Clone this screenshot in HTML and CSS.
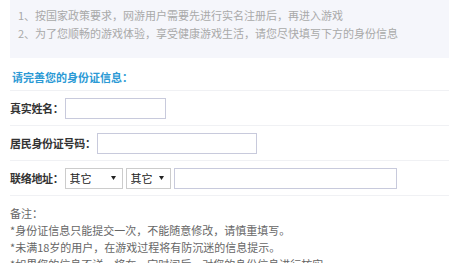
FILE: index.html
```html
<!DOCTYPE html>
<html lang="zh-CN">
<head>
<meta charset="utf-8">
<title>实名认证</title>
<link rel="stylesheet" href="styles.css">
</head>
<body>
<div class="page">
  <div class="tips">
    <p>1、按国家政策要求，网游用户需要先进行实名注册后，再进入游戏</p>
    <p>2、为了您顺畅的游戏体验，享受健康游戏生活，请您尽快填写下方的身份信息</p>
  </div>
  <h3 class="title">请完善您的身份证信息：</h3>
  <div class="row">
    <label class="label">真实姓名：</label>
    <input class="field w-name" type="text">
  </div>
  <div class="row">
    <label class="label">居民身份证号码：</label>
    <input class="field w-id" type="text">
  </div>
  <div class="row">
    <label class="label">联络地址：</label>
    <select class="sel w-prov"><option>其它</option></select>
    <select class="sel w-city"><option>其它</option></select>
    <input class="field w-addr" type="text">
  </div>
  <div class="notes">
    <p>备注：</p>
    <p>*身份证信息只能提交一次，不能随意修改，请慎重填写。</p>
    <p>*未满18岁的用户，在游戏过程将有防沉迷的信息提示。</p>
    <p>*如果您的信息不详，将在一定时间后，对您的身份信息进行核实。</p>
  </div>
</div>
</body>
</html>
```
FILE: styles.css
```css
html, body {
  margin: 0;
  padding: 0;
  background: #ffffff;
}
body {
  font-family: "Noto Sans CJK SC", "Microsoft YaHei", sans-serif;
  font-size: 11px;
  color: #333;
  overflow: hidden;
}
p { margin: 0; }
.page {
  padding: 0 4px 0 10px;
}
.tips {
  background: #f5f6fb;
  height: 58px;
  box-sizing: border-box;
  padding: 6px 8px 0 8px;
  color: #a9a9a9;
  line-height: 18px;
}
.title {
  margin: 0;
  padding: 10px 0 4px 2px;
  line-height: 18px;
  font-size: 11px;
  font-weight: bold;
  color: #2c9ad5;
  border-bottom: 1px solid #f0f1f4;
}
.row {
  display: flex;
  align-items: center;
  height: 34px;
  border-bottom: 1px solid #f0f1f4;
}
.label {
  font-weight: bold;
  color: #333;
  letter-spacing: -0.3px;
  margin-right: 1px;
  white-space: nowrap;
}
.field {
  box-sizing: border-box;
  height: 21px;
  border: 1px solid #c8cadc;
  background: #fff;
  padding: 0 3px;
  margin: 0;
  outline: none;
}
.w-name { width: 101px; }
.w-id { width: 160px; }
.w-addr { width: 223px; margin-left: 3px; }
.sel {
  -webkit-appearance: none;
  appearance: none;
  box-sizing: border-box;
  height: 21px;
  border: 1px solid #cccccc;
  border-radius: 0;
  background: #fff url("data:image/svg+xml;utf8,<svg xmlns='http://www.w3.org/2000/svg' width='5' height='4'><path d='M0 0H5L2.5 4Z' fill='%23222'/></svg>") no-repeat right 6px center;
  font-family: "Noto Sans CJK SC", sans-serif;
  font-size: 11px;
  color: #222;
  padding: 0 12px 0 4px;
  margin: 0;
}
.w-prov { width: 58px; }
.w-city { width: 45px; margin-left: 3px; }
.notes {
  padding-top: 9px;
  line-height: 17px;
  color: #666;
}
```
